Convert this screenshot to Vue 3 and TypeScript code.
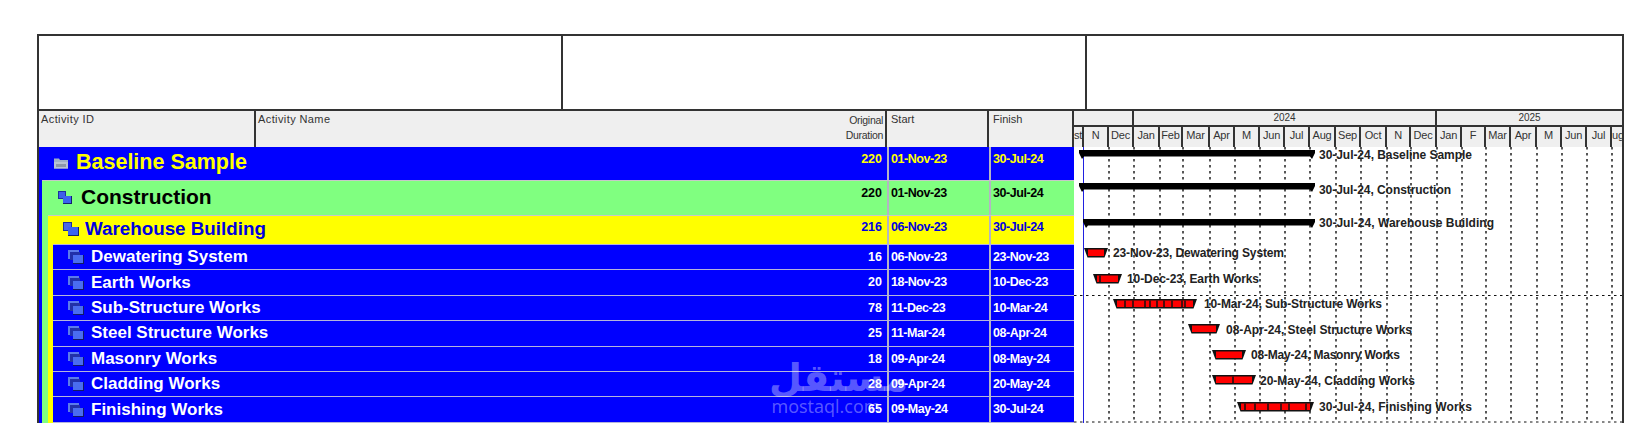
<script setup lang="ts">
interface Row {
  name: string;
  dur: number;
  start: string;
  finish: string;
}

const tasks: Row[] = [
  { name: "Dewatering System", dur: 16, start: "06-Nov-23", finish: "23-Nov-23" },
  { name: "Earth Works", dur: 20, start: "18-Nov-23", finish: "10-Dec-23" },
  { name: "Sub-Structure Works", dur: 78, start: "11-Dec-23", finish: "10-Mar-24" },
  { name: "Steel Structure Works", dur: 25, start: "11-Mar-24", finish: "08-Apr-24" },
  { name: "Masonry Works", dur: 18, start: "09-Apr-24", finish: "08-May-24" },
  { name: "Cladding Works", dur: 28, start: "09-Apr-24", finish: "20-May-24" },
  { name: "Finishing Works", dur: 65, start: "09-May-24", finish: "30-Jul-24" },
];

// month edges in page pixels, the timescale and the gantt both read from this
const edges = [1074, 1084, 1109, 1134, 1160, 1183, 1210, 1235, 1260, 1285, 1310, 1336, 1361, 1387, 1411, 1437, 1462, 1486, 1511, 1537, 1562, 1587, 1612, 1622];
const months = ["st", "N", "Dec", "Jan", "Feb", "Mar", "Apr", "M", "Jun", "Jul", "Aug", "Sep", "Oct", "N", "Dec", "Jan", "F", "Mar", "Apr", "M", "Jun", "Jul", "ug"];
const monthCols = edges.slice(1).map((e, i) => `${e - edges[i]}px`).join(" ");
const gridLines = edges.slice(2, -1);

const summaries = [
  { x1: 1079, x2: 1315, y: 150, label: "30-Jul-24, Baseline Sample", ly: 159, w: 153 },
  { x1: 1079, x2: 1315, y: 183, label: "30-Jul-24, Construction", ly: 194, w: 132 },
  { x1: 1083, x2: 1315, y: 219, label: "30-Jul-24, Warehouse Building", ly: 227, w: 175 },
];

const bars = [
  { x1: 1084, x2: 1108, y: 248, cuts: [], label: "23-Nov-23, Dewatering System", lx: 1113, ly: 257, w: 171 },
  { x1: 1093, x2: 1122, y: 274, cuts: [1100], label: "10-Dec-23, Earth Works", lx: 1127, ly: 283, w: 132 },
  { x1: 1113, x2: 1197, y: 299, cuts: [1125, 1133, 1145, 1150, 1157, 1164, 1172, 1182, 1185], label: "10-Mar-24, Sub-Structure Works", lx: 1204, ly: 308, w: 178 },
  { x1: 1188, x2: 1220, y: 324, cuts: [], label: "08-Apr-24, Steel Structure Works", lx: 1226, ly: 334, w: 186 },
  { x1: 1212, x2: 1246, y: 350, cuts: [], label: "08-May-24, Masonry Works", lx: 1251, ly: 359, w: 149 },
  { x1: 1212, x2: 1256, y: 375, cuts: [1233], label: "20-May-24, Cladding Works", lx: 1260, ly: 385, w: 155 },
  { x1: 1237, x2: 1314, y: 402, cuts: [1245, 1255, 1268, 1281, 1289, 1306], label: "30-Jul-24, Finishing Works", lx: 1319, ly: 411, w: 153 },
];

const trapezoid = (x1: number, x2: number, y: number) =>
  `${x1},${y} ${x2},${y} ${x2 - 3.5},${y + 9.5} ${x1 + 3.5},${y + 9.5}`;

const summaryShape = (x1: number, x2: number, y: number) =>
  `${x1},${y} ${x2},${y} ${x2},${y + 3} ${x2 - 3},${y + 9} ${x2 - 5},${y + 6.5} ${x1 + 5},${y + 6.5} ${x1 + 3},${y + 9} ${x1},${y + 3}`;
</script>

<template>
  <div class="page">
    <div class="frame">
      <div class="title-block">
        <div class="title-cell"></div>
        <div class="title-cell"></div>
        <div class="title-cell"></div>
      </div>

      <div class="head">
        <div class="head-id">Activity ID</div>
        <div class="head-name">Activity Name</div>
        <div class="head-dur">Original<br />Duration</div>
        <div class="head-date">Start</div>
        <div class="head-date">Finish</div>
        <div class="timescale">
          <div class="years">
            <div class="year" style="width: 60px"></div>
            <div class="year" style="width: 303px">2024</div>
            <div class="year year-last">2025</div>
          </div>
          <div class="months" :style="{ gridTemplateColumns: monthCols }">
            <div v-for="(m, i) in months" :key="i" class="month">{{ m }}</div>
          </div>
        </div>
      </div>

      <div class="body">
        <div class="table">
          <div class="row row-top">
            <svg class="ico ico-folder" viewBox="0 0 16 12">
              <path d="M1 3V1.5h5L7 3h8v8.5H1z" fill="#9fb0c8" />
              <path d="M1 5h14v6.5H1z" fill="#b9c3d3" />
              <path d="M3 7h10v3H3z" fill="#8d97aa" />
            </svg>
            <span class="name">Baseline Sample</span>
            <span class="dur">220</span>
            <span class="date">01-Nov-23</span>
            <span class="date">30-Jul-24</span>
          </div>
          <div class="band-green">
            <div class="row row-project">
              <svg class="ico" viewBox="0 0 14 14">
                <path d="M0 1h8v8H0z" fill="#1c2f9e" />
                <path d="M1 2h6v6H1z" fill="#3f5fe8" />
                <path d="M5 6h9v8H5z" fill="#14206e" />
                <path d="M5 6h8v7H5z" fill="#3b62f0" />
              </svg>
              <span class="name">Construction</span>
              <span class="dur">220</span>
              <span class="date">01-Nov-23</span>
              <span class="date">30-Jul-24</span>
            </div>
            <div class="band-yellow">
              <div class="row row-wbs">
                <svg class="ico ico-big" viewBox="0 0 16 14">
                  <path d="M0 0h9v9H0z" fill="#1c2f9e" />
                  <path d="M1 1h7v7H1z" fill="#4a68e6" />
                  <path d="M5 5h11v9H5z" fill="#14206e" />
                  <path d="M5 5h10v8H5z" fill="#3b62f0" />
                </svg>
                <span class="name">Warehouse Building</span>
                <span class="dur">216</span>
                <span class="date">06-Nov-23</span>
                <span class="date">30-Jul-24</span>
              </div>
              <div class="tasks">
                <div v-for="t in tasks" :key="t.name" class="row row-task">
                  <svg class="ico ico-big" viewBox="0 0 16 14">
                    <path d="M0 0h11v2H0zM0 0h2v9H0z" fill="#5c7bea" />
                    <path d="M2 2h10v8H2z" fill="#2231a8" />
                    <path d="M5 5h11v9H5z" fill="#111a66" />
                    <path d="M5 5h10v8H5z" fill="#4a6df0" />
                  </svg>
                  <span class="name">{{ t.name }}</span>
                  <span class="dur">{{ t.dur }}</span>
                  <span class="date">{{ t.start }}</span>
                  <span class="date">{{ t.finish }}</span>
                </div>
              </div>
            </div>
          </div>
          <div class="stamp">
            <div class="stamp-ar">مستقل</div>
            <div class="stamp-en">mostaql.com</div>
          </div>
        </div>

        <svg class="gantt" viewBox="1074 147 548 276">
          <line v-for="x in gridLines" :key="x" :x1="x" :x2="x" y1="147" y2="423" class="grid" />
          <line x1="1074" x2="1622" y1="295.5" y2="295.5" class="grid grid-h" />
          <line x1="1074" x2="1622" y1="422" y2="422" class="grid grid-h" />
          <line x1="1083.5" x2="1083.5" y1="147" y2="423" class="data-date" />

          <g v-for="s in summaries" :key="s.label">
            <polygon :points="summaryShape(s.x1, s.x2, s.y)" fill="#000" />
            <text :x="1319" :y="s.ly" :textLength="s.w" class="lbl">{{ s.label }}</text>
          </g>

          <g v-for="b in bars" :key="b.label">
            <polygon :points="trapezoid(b.x1, b.x2, b.y)" fill="#111" />
            <rect :x="b.x1 + 4" :y="b.y + 1.5" :width="b.x2 - b.x1 - 8" height="6.5" fill="#ff0000" />
            <line v-for="c in b.cuts" :key="c" :x1="c" :x2="c" :y1="b.y + 1.5" :y2="b.y + 8" class="cut" />
            <text :x="b.lx" :y="b.ly" :textLength="b.w" class="lbl">{{ b.label }}</text>
          </g>
        </svg>
      </div>
    </div>
  </div>
</template>

<style>
html,
body {
  margin: 0;
  background: #fff;
  overflow: hidden;
}
</style>

<style scoped>
.page {
  height: 423px;
  overflow: hidden;
  padding: 34px 0 0 37px;
  box-sizing: border-box;
  font-family: "Liberation Sans", Arial, sans-serif;
}

.frame {
  width: 1587px;
  height: 400px;
  border: solid #333;
  border-width: 2px 2px 0 2px;
  box-sizing: border-box;
}

.title-block {
  display: grid;
  grid-template-columns: 524px 524px 1fr;
  height: 73px;
  border-bottom: 2px solid #333;
}

.title-cell {
  border-right: 2px solid #333;
}

.title-cell:last-child {
  border-right: none;
}

.head {
  display: grid;
  grid-template-columns: 217px 572px 59px 102px 85px 1fr;
  height: 36px;
  background: #efefef;
  border-bottom: 2px solid #222;
  box-sizing: content-box;
  margin-bottom: -2px;
  font-size: 11px;
  color: #333;
  line-height: 13px;
}

.head > div {
  border-right: 2px solid #333;
  box-sizing: border-box;
  padding: 2px 2px;
}

.head-id,
.head-name {
  letter-spacing: 0.4px;
}

.head .head-name {
  border-right: none;
}

.head-dur {
  text-align: right;
  font-size: 10.5px;
  line-height: 15px;
  letter-spacing: -0.3px;
  padding-right: 2px !important;
  white-space: nowrap;
}

.head-date {
  padding-left: 4px !important;
}

.head .timescale {
  border-right: none;
  padding: 0;
}

.years {
  display: flex;
  height: 16px;
  border-bottom: 2px solid #333;
  box-sizing: border-box;
}

.year {
  text-align: center;
  font-size: 10px;
  line-height: 14px;
  border-right: 2px solid #333;
  box-sizing: border-box;
}

.year-last {
  flex: 1;
  border-right: none;
}

.months {
  display: grid;
  height: 20px;
}

.month {
  border-right: 2px solid #333;
  box-sizing: border-box;
  text-align: center;
  font-size: 11px;
  line-height: 17px;
  letter-spacing: -0.2px;
  white-space: nowrap;
  overflow: hidden;
}

.month:last-child {
  border-right: none;
}

.body {
  display: flex;
}

.table {
  position: relative;
  width: 1035px;
  flex: none;
  background: #0000ff;
  height: 276px;
  overflow: hidden;
}

.band-green {
  margin-left: 3px;
  background: #80ff80;
  border-top: 1px solid #c8c8c8;
}

.band-yellow {
  margin-left: 6px;
  background: #ffff00;
  border-top: 1px solid #c8c8c8;
}

.tasks {
  margin-left: 5px;
  background: #0000ff;
  border-top: 1px solid #b4b4dc;
}

.row {
  display: flex;
  align-items: center;
  font-weight: bold;
}

.name {
  flex: 1;
  white-space: nowrap;
}

.dur,
.date {
  font-size: 12.5px;
  flex: none;
  align-self: stretch;
  box-sizing: border-box;
  border-left: 2px solid #b4b4c4;
  white-space: nowrap;
}

.dur {
  width: 40px;
  border-left: none;
  text-align: right;
  padding-right: 5px;
}

.date {
  padding-left: 2px;
  letter-spacing: -0.45px;
}

.date:nth-last-child(2) {
  width: 102px;
}

.date:last-child {
  width: 85px;
}

.ico {
  width: 14px;
  height: 14px;
  flex: none;
}

.ico-big {
  width: 16px;
  height: 14px;
}

.ico-folder {
  width: 16px;
  height: 12px;
  margin: 0 7px 0 14px;
}

.row-top {
  height: 33px;
  color: #ffff00;
}

.row-top .name {
  font-size: 21.5px;
  margin-top: -2px;
}

.row-top .ico {
  margin-top: -2px;
}

.row-top .dur,
.row-top .date,
.row-project .dur,
.row-project .date {
  line-height: 24px;
}

.row-project {
  height: 34px;
  color: #000;
}

.row-project .ico {
  margin: -2px 9px 0 16px;
}

.row-project .name {
  font-size: 21px;
  margin-top: -2px;
}

.row-wbs {
  height: 28px;
  color: #0000e0;
}

.row-wbs .ico {
  margin: -2px 6px 0 15px;
}

.row-wbs .name {
  font-size: 18.8px;
  margin-top: -2px;
}

.row-wbs .dur,
.row-wbs .date {
  line-height: 22px;
}

.row-task {
  height: 25.4px;
  box-sizing: border-box;
  color: #fff;
  background: #0000ff;
  border-bottom: 1px solid #b4b4dc;
}

.row-task .ico {
  margin: 0 7px 0 15px;
}

.row-task .name {
  font-size: 17px;
}

.row-task .dur,
.row-task .date {
  line-height: 24px;
}

.stamp {
  position: absolute;
  left: 730px;
  top: 213px;
  width: 114px;
  text-align: center;
  color: rgba(255, 255, 255, 0.36);
}

.stamp-ar {
  font-family: "DejaVu Sans", sans-serif;
  font-weight: bold;
  font-size: 38px;
  line-height: 37px;
}

.stamp-en {
  font-family: "Open Sans", sans-serif;
  font-size: 18px;
  line-height: 18px;
}

.gantt {
  width: 548px;
  height: 276px;
  flex: none;
  background: #fff;
}

.grid {
  stroke: #111;
  stroke-width: 1.4;
  stroke-dasharray: 2.5 3.5;
}

.grid-h {
  stroke-width: 1;
}

.data-date {
  stroke: #2020e0;
  stroke-width: 1;
}

.cut {
  stroke: #111;
  stroke-width: 1.5;
}

.lbl {
  font-family: "Liberation Sans", Arial, sans-serif;
  font-size: 12px;
  font-weight: bold;
  fill: #222;
}
</style>
